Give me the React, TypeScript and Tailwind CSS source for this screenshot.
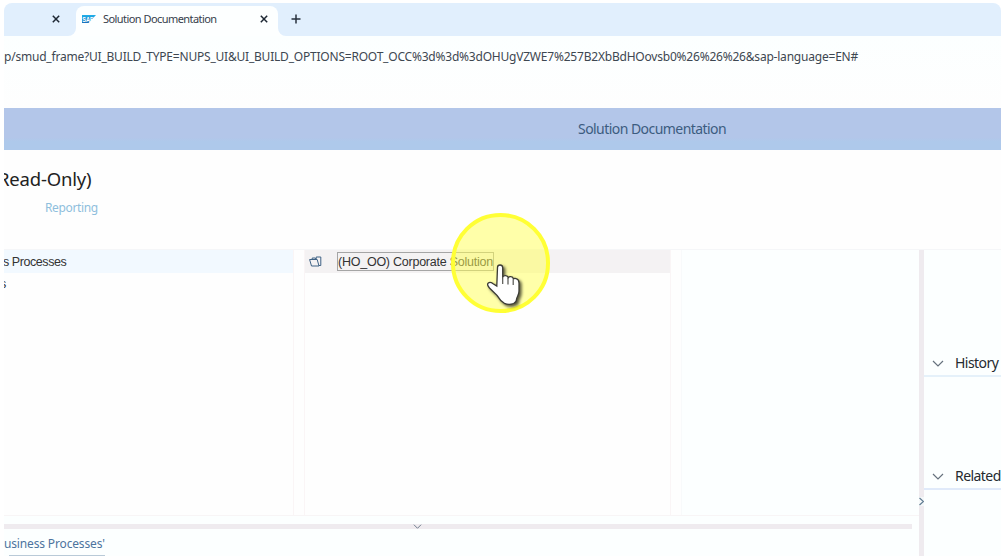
import React from "react";

function Cross() {
  return (
    <svg className="h-[8px] w-[8px] shrink-0" viewBox="0 0 8 8" fill="none" stroke="#1d2733" strokeWidth="1.5">
      <path d="M.8.8l6.4 6.4M7.2.8L.8 7.2" />
    </svg>
  );
}

function ChevronDown({ className }: { className: string }) {
  return (
    <svg className={className} viewBox="0 0 12 7" fill="none" stroke="currentColor" strokeWidth="1.2">
      <path d="M1 1l5 5 5-5" />
    </svg>
  );
}

function SapLogo() {
  return (
    <svg className="h-[8px] w-[14px] shrink-0" viewBox="0 0 14 8">
      <defs>
        <linearGradient id="sap" x1="0" y1="0" x2="0" y2="1">
          <stop offset="0" stopColor="#1fb0ea" />
          <stop offset="1" stopColor="#1b70bb" />
        </linearGradient>
      </defs>
      <path d="M0 0h14L6.500 8H0z" fill="url(#sap)" />
      <text x=".2" y="6.600" fontSize="7.500" fontWeight="700" fontFamily="Liberation Sans, sans-serif" fill="#fff" textLength="11.500" lengthAdjust="spacingAndGlyphs">SAP</text>
    </svg>
  );
}

function FolderIcon() {
  return (
    <svg className="h-[11px] w-[13px] shrink-0" viewBox="0 0 13 11" fill="none" stroke="#3f6285" strokeWidth="1">
      <path d="M2.500 10L.6 3.500h7.600L10 10zM3.200 3.300V2h3l.6 1.300M7.200 3V1h4.600v8.500H10" />
    </svg>
  );
}

function TabCorner({ className }: { className: string }) {
  return (
    <svg className={className} viewBox="0 0 8 8">
      <path d="M8 0v8H0a8 8 0 0 0 8-8z" fill="#fdffff" />
    </svg>
  );
}

function BrowserTabs() {
  return (
    <div className="flex h-[33px] shrink-0 items-end bg-[#e1effd]">
      <div className="flex h-[33px] w-[64px] items-center pb-[1px] pl-[48px]">
        <Cross />
      </div>
      <TabCorner className="h-[8px] w-[8px]" />
      <div className="flex h-[30px] w-[202px] items-center rounded-t-[8px] bg-[#fdffff] pb-[4px] pl-[6px]">
        <SapLogo />
        <span className="ml-[7px] w-[157px] whitespace-nowrap text-[11px] leading-[16px] tracking-[-0.560px] text-[#37404b]">Solution Documentation</span>
        <Cross />
      </div>
      <TabCorner className="h-[8px] w-[8px] -scale-x-100" />
      <svg className="mb-[12px] ml-[5px] h-[10px] w-[10px]" viewBox="0 0 10 10" stroke="#27313d" strokeWidth="1.500">
        <path d="M5 .5v9M.5 5h9" />
      </svg>
    </div>
  );
}

function Section({ title, className }: { title: string; className: string }) {
  return (
    <div className={className}>
      <ChevronDown className="ml-[8px] mt-[2px] h-[7px] w-[12px] shrink-0 text-[#66717d]" />
      <span className="ml-[11px] text-[14px] leading-[20px] tracking-[-0.550px] text-[#252a30]">{title}</span>
    </div>
  );
}

function HandPointer() {
  return (
    <svg className="absolute left-[481px] top-[259px] h-[52px] w-[46px] drop-shadow-[2px_2px_1.500px_rgba(0,0,0,0.65)]" viewBox="482 259 46 52">
      <path
        d="M498.500 267.500q0-2.500 2.500-2.500t2.700 2.500v9.500q1-1.700 3-1.400 2 .2 2.500 2.100 1-1.400 2.800-1 2 .3 2.400 2.200 1.200-.8 2.800-.2 2.800.8 2.800 4.300v8c0 4-1.800 5.300-2.400 8 0 2.500-1 3.700-3 4.500q-5 1.700-9.200-.2c-3-1.800-5.400-4.600-7.400-8l-7.500-7.300q-3-3.500-1.200-5t4.800.7l3.700 2.300z"
        fill="#fff"
        stroke="#3c3c35"
        strokeWidth="1.300"
      />
      <path d="M503.700 277v7M509 278v6.500M514.200 279.500v5.500" stroke="#555550" strokeWidth="1.200" />
    </svg>
  );
}

export default function App() {
  return (
    <div className="relative h-[560px] w-[1004px] overflow-hidden bg-white pl-[4px] pt-[3px] font-['Noto_Sans','Open_Sans',sans-serif]">
      <div className="flex h-[553px] w-[997px] flex-col overflow-hidden rounded-t-[8px] bg-[#fefefe]">
        <BrowserTabs />
        <div className="flex h-[72px] shrink-0 items-start bg-gradient-to-b from-[#fcffff] to-[#fefefe] pt-[11px]">
          <span className="whitespace-nowrap text-[12px] leading-[20px] tracking-[-0.210px] text-[#3e4751]">
            p/smud_frame?UI_BUILD_TYPE=NUPS_UI&amp;UI_BUILD_OPTIONS=ROOT_OCC%3d%3d%3dOHUgVZWE7%257B2XbBdHOovsb0%26%26%26&amp;sap-language=EN#
          </span>
        </div>
        <header className="h-[42px] shrink-0 bg-[linear-gradient(to_bottom,#b3c6e9_0%,#b3c6e9_70%,#aec9eb_80%,#aec9eb_100%)] pl-[574px] pt-[11px] text-[14px] leading-[20px] tracking-[-0.550px] text-[#3c5c80]">
          Solution Documentation
        </header>
        <div className="h-[100px] shrink-0 border-b border-[#f5f6f8] pt-[16px]">
          <h1 className="-ml-[6px] text-[18.500px] leading-[26px] tracking-[-0.200px] text-[#222]">Read-Only)</h1>
          <div className="ml-[41px] mt-[6px] text-[12px] leading-[20px] tracking-[-0.350px] text-[#8fbfdd]">Reporting</div>
        </div>
        <div className="flex min-h-0 flex-1">
          <div className="flex w-[915px] flex-col bg-[#fcffff]">
            <div className="flex h-[266px] shrink-0 border-b border-[#f8f5f6] font-['Liberation_Sans',sans-serif] text-[12.500px] tracking-[-0.240px] text-[#333]">
              <div className="w-[290px] overflow-hidden border-r border-[#faf5f6] bg-[#fefefe]">
                <div className="h-[23px] bg-[#f2f9ff] leading-[24px] tracking-[-0.430px]"><span className="-ml-[1px]">s Processes</span></div>
                <div className="h-[22px] leading-[23px]"><span className="-ml-[4px]">s</span></div>
              </div>
              <div className="w-[10px] bg-[#fefefe]" />
              <div className="w-[367px] border-x border-[#faf5f6] bg-[#fefefe]">
                <div className="flex h-[23px] items-center bg-[#f4f2f3] pl-[4px]">
                  <FolderIcon />
                  <span className="ml-[15px] h-[19px] w-[157px] whitespace-nowrap border border-[#a5a5a5] leading-[18px]">(HO_OO) Corporate Solution</span>
                </div>
              </div>
              <div className="w-[11px] border-r border-[#f8fafb] bg-[#fefefe]" />
            </div>
            <div className="mt-[8px] flex h-[5px] w-[908px] shrink-0 justify-start bg-[#efebef] pl-[409px]">
              <ChevronDown className="h-[5px] w-[9px] text-[#5c6e7e]" />
            </div>
            <div className="flex flex-1 flex-col justify-between">
              <div className="pt-[6px] text-[12px] leading-[18px] tracking-[-0.150px] text-[#4d749e]">usiness Processes&apos;</div>
              <div className="ml-[5px] h-px w-[96px] bg-[#b9cad8]" />
            </div>
          </div>
          <div className="flex w-[5px] flex-col bg-[#efebef] pt-[247px]">
            <svg className="h-[9px] w-[5px] bg-[#f5f8f9]" viewBox="0 0 5 9" fill="none" stroke="#5f7b91" strokeWidth="1.200"><path d="M.5 1l4 3.500-4 3.500" /></svg>
          </div>
          <div className="flex-1 overflow-hidden bg-[#fcffff]">
            <Section title="History" className="mt-[100px] flex h-[27px] items-center border-b-2 border-[#e5f1fa]" />
            <Section title="Related" className="mt-[86px] flex h-[27px] items-center border-b-2 border-[#e0eafa]" />
          </div>
        </div>
      </div>
      <div className="absolute left-[451px] top-[213px] h-[100px] w-[99px] rounded-full border-[4px] border-[#ffff35] bg-[#ffff53]/50" />
      <HandPointer />
    </div>
  );
}
